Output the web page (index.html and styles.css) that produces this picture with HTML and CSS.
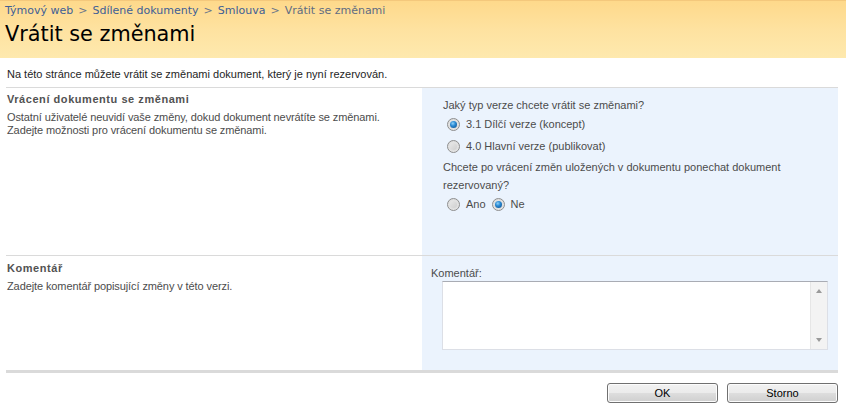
FILE: index.html
```html
<!DOCTYPE html>
<html lang="cs">
<head>
<meta charset="utf-8">
<title>Vrátit se změnami</title>
<link rel="stylesheet" href="styles.css">
</head>
<body>
<header class="titlearea">
  <nav class="crumbs">
    <a href="#">Týmový web</a><span class="sep">&gt;</span><a href="#">Sdílené dokumenty</a><span class="sep">&gt;</span><a href="#">Smlouva</a><span class="sep">&gt;</span><span class="current">Vrátit se změnami</span>
  </nav>
  <h1 class="title">Vrátit se změnami</h1>
</header>
<main class="content">
  <p class="intro">Na této stránce můžete vrátit se změnami dokument, který je nyní rezervován.</p>
  <section class="sect sect-version">
    <div class="desc">
      <h3 class="sect-head">Vrácení dokumentu se změnami</h3>
      <p class="sect-text">Ostatní uživatelé neuvidí vaše změny, dokud dokument nevrátíte se změnami.<br>Zadejte možnosti pro vrácení dokumentu se změnami.</p>
    </div>
    <div class="ctrl ctrl-version">
      <div class="line">Jaký typ verze chcete vrátit se změnami?</div>
      <label class="opt opt-first"><span class="radio checked"></span>3.1 Dílčí verze (koncept)</label>
      <label class="opt opt-second"><span class="radio"></span>4.0 Hlavní verze (publikovat)</label>
      <div class="line line-q">Chcete po vrácení změn uložených v dokumentu ponechat dokument</div>
      <div class="line">rezervovaný?</div>
      <div class="opt-row">
        <label class="opt"><span class="radio"></span>Ano</label>
        <label class="opt opt-ne"><span class="radio checked"></span>Ne</label>
      </div>
    </div>
  </section>
  <section class="sect sect-comment">
    <div class="desc">
      <h3 class="sect-head">Komentář</h3>
      <p class="sect-text">Zadejte komentář popisující změny v této verzi.</p>
    </div>
    <div class="ctrl ctrl-comment">
      <div class="comment-label">Komentář:</div>
      <div class="textbox">
        <div class="text-field"></div>
        <div class="scrollbar">
          <span class="arrow arrow-up"></span>
          <span class="arrow arrow-down"></span>
        </div>
      </div>
    </div>
  </section>
  <div class="buttons">
    <button class="btn" type="button">OK</button>
    <button class="btn" type="button">Storno</button>
  </div>
</main>
</body>
</html>
```
FILE: styles.css
```css
html, body {
  margin: 0;
  padding: 0;
  background: #ffffff;
}
body {
  font-family: "Liberation Sans", Arial, sans-serif;
  font-size: 11px;
  color: #4c4c4c;
}
.titlearea {
  height: 58px;
  box-sizing: border-box;
  padding: 3px 0 0 5px;
  border-top: 1px solid #f4c87c;
  background: linear-gradient(to bottom, #fed98b 0%, #fee2a0 50%, #fee9ae 100%);
}
.crumbs {
  font-family: "DejaVu Sans", Verdana, sans-serif;
  font-size: 11px;
  line-height: 14px;
  color: #6b7689;
  white-space: nowrap;
}
.crumbs a {
  color: #3f5f96;
  text-decoration: none;
}
.crumbs .sep {
  margin: 0 5px;
  color: #6b7689;
}
.crumbs .current {
  color: #5f6c82;
}
.title {
  margin: 3px 0 0 0;
  font-family: "DejaVu Sans", Verdana, sans-serif;
  font-weight: normal;
  font-size: 20.8px;
  line-height: 26px;
  color: #000000;
}
.content {
  padding: 0 8px 0 6px;
}
.intro {
  margin: 0;
  padding: 9px 0 0 1px;
  line-height: 14px;
  height: 20px;
  color: #1e1e1e;
  border-bottom: 1px solid #dadada;
}
.sect {
  display: flex;
  border-bottom: 1px solid #dadada;
}
.sect-version {
  height: 167px;
}
.sect-comment {
  height: 114px;
  border-bottom: 3px solid #dadada;
}
.desc {
  width: 416px;
  padding-left: 1px;
  box-sizing: border-box;
}
.sect-version .desc {
  padding-top: 4px;
}
.sect-comment .desc {
  padding-top: 5px;
}
.sect-head {
  margin: 0;
  font-size: 11px;
  line-height: 14px;
  font-weight: bold;
  color: #525252;
  letter-spacing: 0.55px;
}
.sect-text {
  margin: 5px 0 0 0;
  line-height: 13px;
  color: #4c4c4c;
  letter-spacing: -0.1px;
}
.ctrl {
  flex: 1;
  background: #ebf3fd;
  box-sizing: border-box;
}
.ctrl-version {
  padding: 8px 0 0 21px;
  color: #4c4c4c;
}
.line {
  line-height: 18px;
}
.opt {
  display: flex;
  align-items: center;
  height: 18px;
  line-height: 18px;
  margin-left: 4px;
}
.opt-first {
  margin-top: 1px;
}
.opt-second {
  margin-top: 4px;
}
.line-q {
  margin-top: 3px;
}
.opt-row {
  display: flex;
  height: 18px;
  margin-top: 1px;
}
.opt-ne {
  margin-left: 6px;
}
.radio {
  position: relative;
  display: inline-block;
  width: 11px;
  height: 11px;
  border: 1px solid #8d8d8d;
  border-radius: 50%;
  background: radial-gradient(circle at 50% 45%, #f4f4f4 0%, #dedede 55%, #f6f6f6 100%);
  margin-right: 6px;
  box-sizing: content-box;
}
.radio::after {
  content: "";
  position: absolute;
  left: 2px;
  top: 2px;
  width: 7px;
  height: 7px;
  border-radius: 50%;
  background: linear-gradient(135deg, #e7e7e7 0%, #cfcfcf 100%);
}
.radio.checked::after {
  background: radial-gradient(circle at 40% 35%, #8fd1f7 0%, #2a8ad4 40%, #0d4a85 100%);
}
.ctrl-comment {
  padding: 10px 0 0 9px;
}
.comment-label {
  line-height: 14px;
  color: #4c4c4c;
}
.textbox {
  display: flex;
  width: 386px;
  height: 69px;
  margin: 1px 0 0 11px;
  box-sizing: border-box;
  border: 1px solid #dcdfe6;
  border-top-color: #a9acb4;
  background: #ffffff;
}
.text-field {
  flex: 1;
}
.scrollbar {
  width: 17px;
  display: flex;
  flex-direction: column;
  justify-content: space-between;
  align-items: center;
  padding: 7px 0 7px 0;
  box-sizing: border-box;
  background: #f3f3f3;
  border-left: 1px solid #e6e6e6;
}
.arrow {
  width: 0;
  height: 0;
  border-left: 3.5px solid transparent;
  border-right: 3.5px solid transparent;
}
.arrow-up {
  border-bottom: 4px solid #9a9a9a;
}
.arrow-down {
  border-top: 4px solid #9a9a9a;
}
.buttons {
  display: flex;
  justify-content: flex-end;
  gap: 9px;
  padding-top: 10px;
}
.btn {
  width: 111px;
  height: 20px;
  padding: 0;
  border: 1px solid #707070;
  border-radius: 3px;
  background: linear-gradient(to bottom, #f2f2f2 0%, #ebebeb 48%, #dddddd 52%, #cfcfcf 100%);
  font-family: "Liberation Sans", Arial, sans-serif;
  font-size: 11px;
  color: #000000;
  box-shadow: inset 0 0 0 1px #fcfcfc;
}
```
